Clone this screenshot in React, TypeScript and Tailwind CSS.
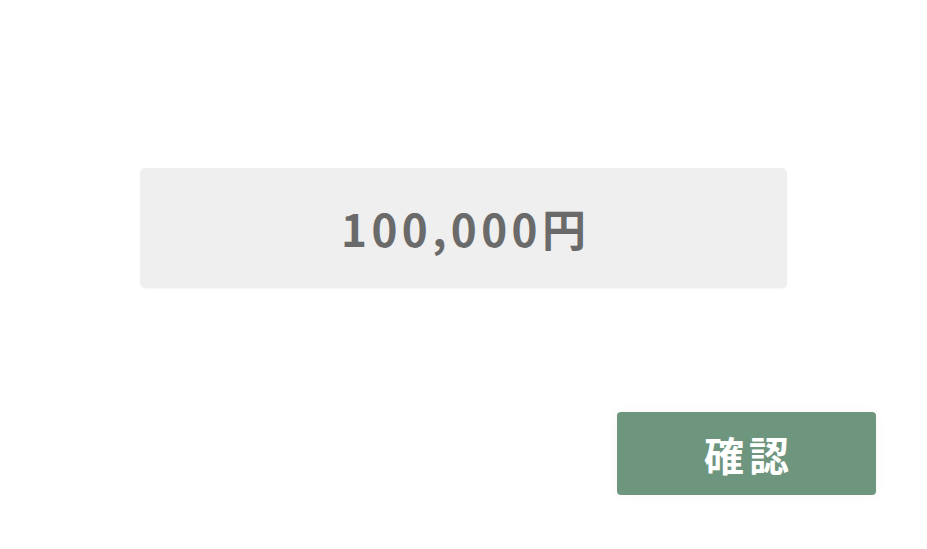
export default function App() {
  return (
    <div className="flex min-h-[549px] w-full flex-col bg-white font-['Noto_Sans_CJK_JP','Noto_Sans',sans-serif]">
      <div className="mx-auto mt-[168px] flex h-[120px] w-[647px] items-center justify-center rounded-[5px] bg-[#efefef] shadow-[0_1px_2px_rgba(0,0,0,0.04)]">
        <span className="pl-[0.1em] text-[44px] font-bold tracking-[0.1em] text-[#6a6a6a]">100,000円</span>
      </div>
      <div className="mr-[51px] mt-[124px] flex justify-end">
        <button className="flex h-[83px] w-[259px] items-center justify-center rounded-[4px] bg-[#6e967f] shadow-[0_0_12px_rgba(0,0,0,0.04)]">
          <span className="pl-[0.12em] text-[40px] font-bold tracking-[0.12em] text-white">確認</span>
        </button>
      </div>
    </div>
  );
}
